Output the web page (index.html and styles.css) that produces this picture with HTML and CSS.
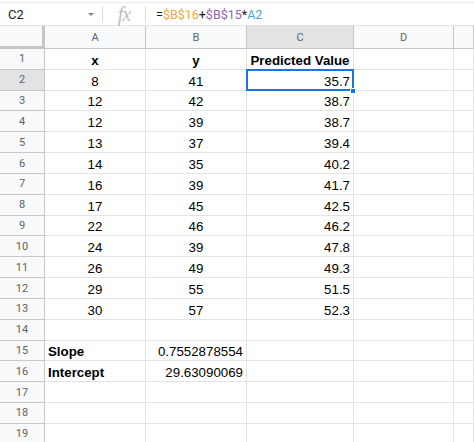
FILE: index.html
```html
<!DOCTYPE html>
<html>
<head>
<meta charset="utf-8">
<link rel="stylesheet" href="styles.css">
</head>
<body>
<div class="fbar">
  <div class="namebox"><span class="ref">C2</span><span class="caret"></span></div>
  <div class="sep"></div>
  <div class="fx">fx</div>
  <div class="sep"></div>
  <div class="formula">=<span class="r1">$B$16</span>+<span class="r2">$B$15</span>*<span class="r3">A2</span></div>
</div>
<div class="sheet" id="sheet"></div>
<script src="app.js"></script>
</body>
</html>
```
FILE: app.js
```js
const data = [
  [["x","b c"],["y","b c"],["Predicted Value","b c"]],
  [["8","c"],["41","c"],["35.7","r"]],
  [["12","c"],["42","c"],["38.7","r"]],
  [["12","c"],["39","c"],["38.7","r"]],
  [["13","c"],["37","c"],["39.4","r"]],
  [["14","c"],["35","c"],["40.2","r"]],
  [["16","c"],["39","c"],["41.7","r"]],
  [["17","c"],["45","c"],["42.5","r"]],
  [["22","c"],["46","c"],["46.2","r"]],
  [["24","c"],["39","c"],["47.8","r"]],
  [["26","c"],["49","c"],["49.3","r"]],
  [["29","c"],["55","c"],["51.5","r"]],
  [["30","c"],["57","c"],["52.3","r"]],
  [],
  [["Slope","b l"],["0.7552878554","r"]],
  [["Intercept","b l"],["29.63090069","r"]],
  [],[],[]
];
const sheet = document.getElementById('sheet');
function el(cls, txt){ const d=document.createElement('div'); d.className=cls; if(txt!==undefined) d.textContent=txt; sheet.appendChild(d); return d; }
el('corner');
['A','B','C','D',''].forEach(l => el('colh' + (l==='C'?' sel':''), l));
data.forEach((row,i) => {
  el('rowh' + (i===1?' sel':''), String(i+1));
  for (let c=0;c<5;c++){
    const v = row[c];
    const d = el('cell ' + (v ? v[1] : ''), v ? v[0] : '');
    if (i===1 && c===2) d.classList.add('active');
  }
});
```
FILE: styles.css
```css
html, body { margin: 0; padding: 0; background: #fff; }
body { width: 474px; height: 442px; overflow: hidden; font-family: "Liberation Sans", Arial, sans-serif; }

.fbar {
  margin-top: 2px;
  height: 22px;
  border-top: 1px solid #e8eaed;
  border-bottom: 1px solid #e2e3e3;
  display: flex;
  align-items: center;
  font-family: Roboto, "Liberation Sans", sans-serif;
  font-size: 12.5px;
  color: #202124;
}
.namebox { width: 102px; display: flex; align-items: center; }
.ref { margin-left: 8px; font-size: 13px; }
.caret {
  margin-left: auto; margin-right: 8px;
  width: 0; height: 0;
  border-left: 3px solid transparent; border-right: 3px solid transparent;
  border-top: 3px solid #80868b;
}
.sep { width: 1px; height: 17px; background: #dadce0; }
.fx {
  width: 42px; text-align: center;
  font-family: "Liberation Serif", serif; font-style: italic;
  font-size: 20px; color: #bdc1c6; line-height: 22px; letter-spacing: -1px;
}
.formula { margin-left: 10px; }
.r1 { color: #f0a73c; }
.r2 { color: #8f63b8; }
.r3 { color: #4aa6cf; }

.sheet {
  display: grid;
  grid-template-columns: 45px 101px 101px 107px 100px 20px;
  grid-template-rows: 23px repeat(19, 20.83px);
  font-size: 13.3px;
  color: #000;
}
.corner {
  background: #f8f9fa;
  border-right: 3px solid #c4c7c5;
  border-bottom: 3px solid #c4c7c5;
}
.colh {
  background: #f8f9fa;
  border-right: 1px solid #c7c7c7;
  border-bottom: 1px solid #c4c7c5;
  font-family: Roboto, "Liberation Sans", sans-serif;
  font-size: 11px; color: #5f6368;
  display: flex; align-items: center; justify-content: center;
}
.colh.sel { background: #e1e3e5; }
.rowh {
  background: #f8f9fa;
  border-right: 1px solid #c4c7c5;
  border-bottom: 1px solid #c7c7c7;
  font-family: Roboto, "Liberation Sans", sans-serif;
  font-size: 11px; color: #5f6368;
  display: flex; align-items: center; justify-content: center;
}
.rowh.sel { background: #e1e3e5; }
.cell {
  border-right: 1px solid #e2e3e3;
  border-bottom: 1px solid #e2e3e3;
  display: flex; align-items: flex-end;
  padding: 0 3px; white-space: nowrap; line-height: 16px;
  position: relative;
}
.cell.c { justify-content: center; }
.cell.r { justify-content: flex-end; }
.cell.l { justify-content: flex-start; }
.cell.b { font-weight: bold; }
.cell.active::after {
  content: ""; position: absolute;
  left: -1px; top: -1px; right: -1px; bottom: -1px;
  border: 2px solid #1a73e8;
}
.cell.active::before {
  content: ""; position: absolute; z-index: 2;
  right: -3px; bottom: -4px; width: 6px; height: 6px;
  background: #1a73e8; border: 1px solid #fff; box-sizing: border-box;
}
```
